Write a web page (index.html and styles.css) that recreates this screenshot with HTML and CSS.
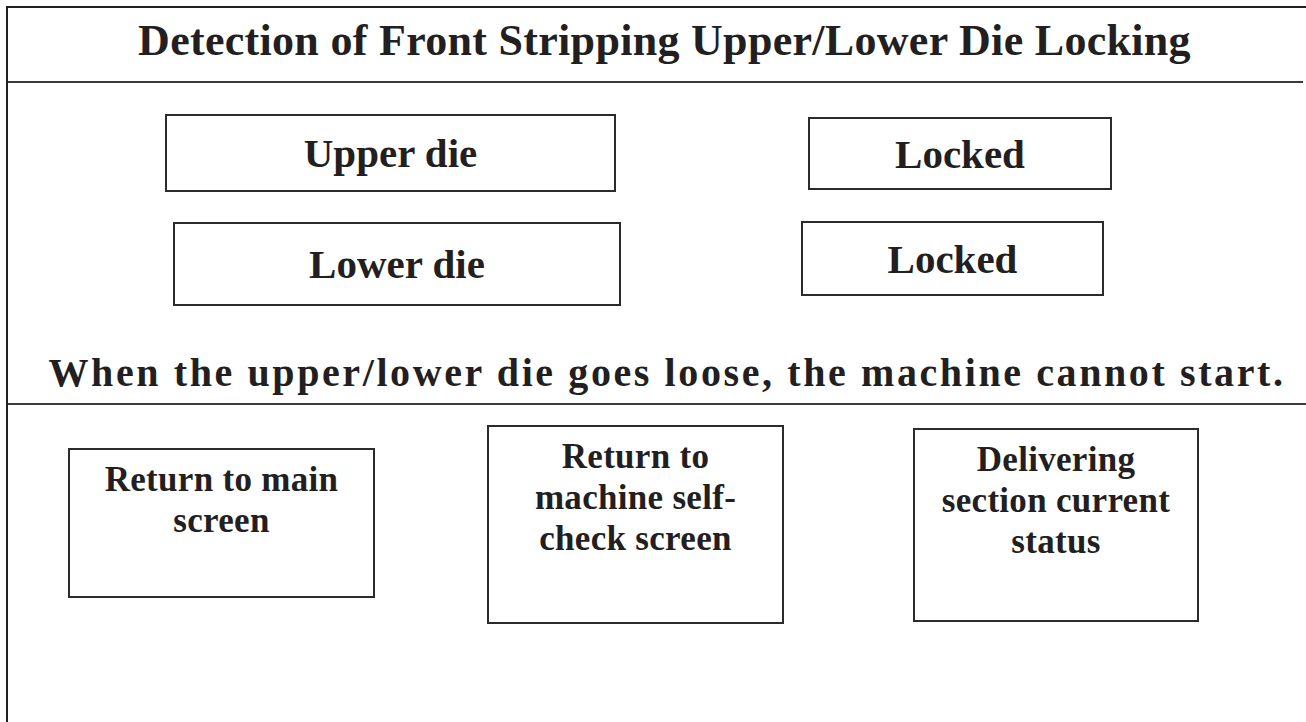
FILE: index.html
```html
<!DOCTYPE html>
<html lang="en">
<head>
    <meta charset="UTF-8">
    <meta name="viewport" content="width=device-width, initial-scale=1.0">
    <title>Die Locking Detection</title>
    <link rel="stylesheet" href="styles.css">
</head>
<body>
    <div class="panel">
        <h1 class="title">Detection of Front Stripping Upper/Lower Die Locking</h1>

        <div class="die-row">
            <div class="box die-name upper">Upper die</div>
            <div class="box die-state state-upper">Locked</div>
        </div>
        <div class="die-row">
            <div class="box die-name lower">Lower die</div>
            <div class="box die-state state-lower">Locked</div>
        </div>

        <p class="warning">When the upper/lower die goes loose, the machine cannot start.</p>

        <div class="nav-row">
            <div class="box nav-btn btn-main">Return to main<br>screen</div>
            <div class="box nav-btn btn-selfcheck">Return to<br>machine self-<br>check screen</div>
            <div class="box nav-btn btn-status">Delivering<br>section current<br>status</div>
        </div>
    </div>
</body>
</html>
```

FILE: styles.css
```css
* {
    box-sizing: border-box;
}
body {
    margin: 0;
    padding: 0;
    background: #fff;
    color: #231f20;
    font-family: "Liberation Serif", "Times New Roman", serif;
    font-weight: bold;
}
.panel {
    margin: 6px 0 0 6px;
    height: 716px;
    border-left: 2px solid #231f20;
    border-top: 2px solid #231f20;
}
.title {
    margin: 0 3px 0 0;
    height: 75px;
    padding: 0 0 9px 18px;
    font-size: 44px;
    line-height: 66px;
    letter-spacing: 0.3px;
    text-align: center;
    border-bottom: 2px solid #3a3a3a;
}
.box {
    border: 2px solid #2b2b2b;
    background: #fff;
}
.die-row {
    display: flex;
    align-items: flex-start;
}
.die-row:first-of-type {
    margin-top: 31px;
}
.die-name, .die-state {
    display: flex;
    align-items: center;
    justify-content: center;
    font-size: 41px;
}
.upper {
    margin-left: 157px;
    width: 451px;
    height: 78px;
}
.state-upper {
    margin: 3px 0 0 192px;
    width: 304px;
    height: 73px;
}
.die-row + .die-row {
    margin-top: 29px;
}
.lower {
    margin: 1px 0 0 165px;
    width: 448px;
    height: 84px;
}
.state-lower {
    margin-left: 180px;
    width: 303px;
    height: 75px;
}
.warning {
    margin: 44px 0 0 0;
    padding: 0 0 7px 20px;
    font-size: 40px;
    line-height: 46px;
    letter-spacing: 2.6px;
    text-align: center;
    border-bottom: 2px solid #3a3a3a;
}
.nav-row {
    display: flex;
    align-items: flex-start;
    margin-top: 20px;
}
.nav-btn {
    padding-top: 9px;
    font-size: 35px;
    line-height: 41px;
    letter-spacing: 0.3px;
    text-align: center;
    cursor: pointer;
}
.btn-main {
    margin: 23px 0 0 60px;
    width: 307px;
    height: 150px;
}
.btn-selfcheck {
    margin-left: 112px;
    width: 297px;
    height: 199px;
}
.btn-status {
    margin: 3px 0 0 129px;
    width: 286px;
    height: 194px;
}
```
